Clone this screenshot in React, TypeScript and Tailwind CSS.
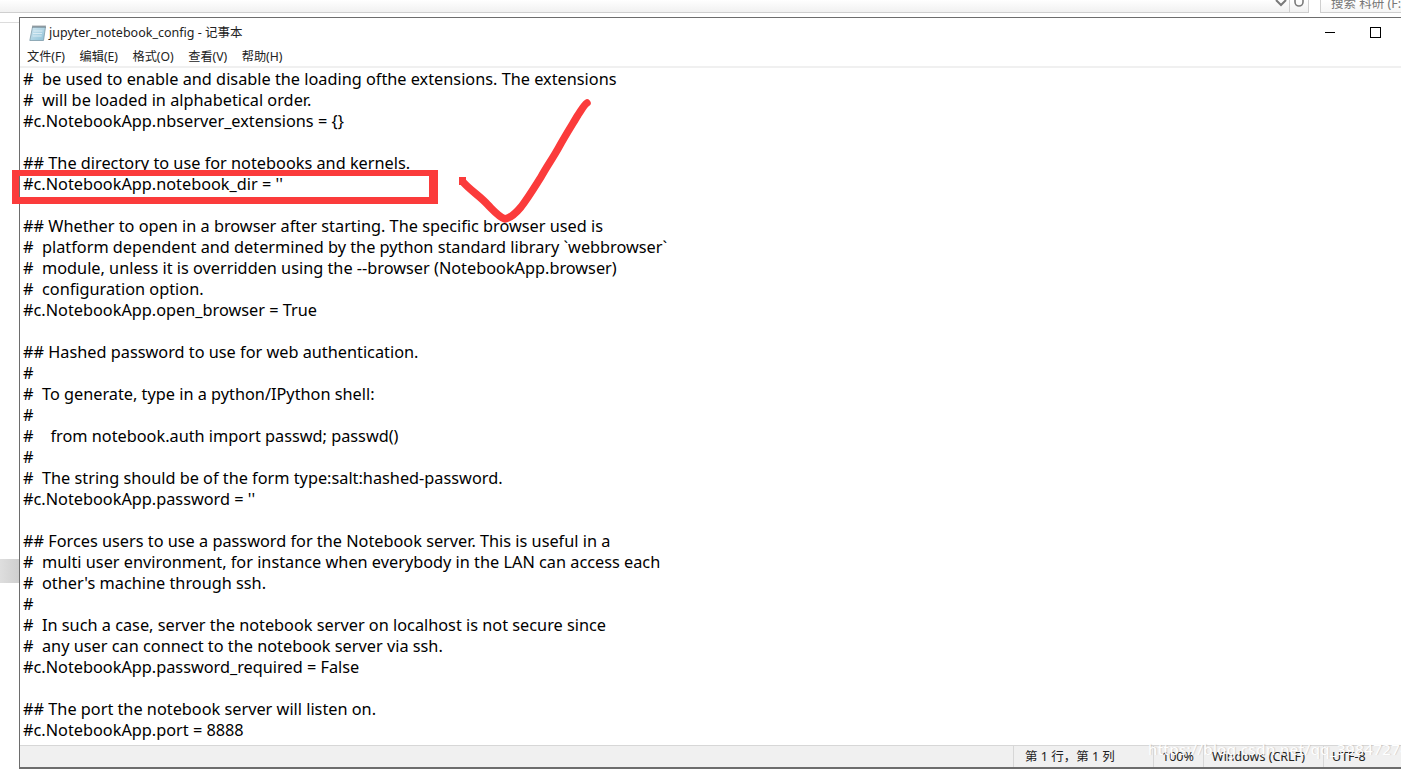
import React from "react";

const FONT = "font-['Noto_Sans','Noto_Sans_CJK_SC',sans-serif]";

const LINES = [
  "#  be used to enable and disable the loading ofthe extensions. The extensions",
  "#  will be loaded in alphabetical order.",
  "#c.NotebookApp.nbserver_extensions = {}",
  "",
  "## The directory to use for notebooks and kernels.",
  "#c.NotebookApp.notebook_dir = ''",
  "",
  "## Whether to open in a browser after starting. The specific browser used is",
  "#  platform dependent and determined by the python standard library `webbrowser`",
  "#  module, unless it is overridden using the --browser (NotebookApp.browser)",
  "#  configuration option.",
  "#c.NotebookApp.open_browser = True",
  "",
  "## Hashed password to use for web authentication.",
  "#",
  "#  To generate, type in a python/IPython shell:",
  "#",
  "#    from notebook.auth import passwd; passwd()",
  "#",
  "#  The string should be of the form type:salt:hashed-password.",
  "#c.NotebookApp.password = ''",
  "",
  "## Forces users to use a password for the Notebook server. This is useful in a",
  "#  multi user environment, for instance when everybody in the LAN can access each",
  "#  other's machine through ssh.",
  "#",
  "#  In such a case, server the notebook server on localhost is not secure since",
  "#  any user can connect to the notebook server via ssh.",
  "#c.NotebookApp.password_required = False",
  "",
  "## The port the notebook server will listen on.",
  "#c.NotebookApp.port = 8888",
];

const MENU = ["文件(F)", "编辑(E)", "格式(O)", "查看(V)", "帮助(H)"];

function NotepadIcon() {
  return (
    <svg width="17" height="16" viewBox="0 0 17 16" className="shrink-0">
      <defs>
        <linearGradient id="pad" x1="0" y1="0" x2="1" y2="1">
          <stop offset="0" stopColor="#d3e8f2" />
          <stop offset="1" stopColor="#8cc0d6" />
        </linearGradient>
      </defs>
      <path d="M3.5 2h13l-2 13.5H.8z" fill="url(#pad)" stroke="#7f9aa8" strokeWidth="0.8" />
      <path d="M3.5 1.5h13" stroke="#4f5b63" strokeWidth="2" strokeDasharray="1 1" />
      <path d="M4.5 6h9M4 8.5h9M3.6 11h9" stroke="#e3f1f7" strokeWidth="0.8" />
    </svg>
  );
}

function TopStrip() {
  return (
    <div className="h-[17px] flex items-start bg-white">
      <div className="flex-1 h-[13px] flex justify-end items-start border-b border-r border-[#cfcfcf] bg-gradient-to-b from-white to-[#f1f1f1] mr-[11px]">
        <svg width="14" height="8" viewBox="0 0 14 8">
          <path d="M2 0l5 5 5-5" fill="none" stroke="#7a7a7a" strokeWidth="2" />
        </svg>
        <div className="w-px h-[12px] bg-[#cfcfcf] ml-[1px]" />
        <svg width="12" height="8" viewBox="0 0 12 8" className="ml-[3px] mr-[1px]">
          <path d="M2 0v2a4 4 0 0 0 8 0V0" fill="none" stroke="#7a7a7a" strokeWidth="1.6" />
        </svg>
        <div className="w-[2px]" />
      </div>
      <div className="w-[81px] h-[13px] border-l border-b border-[#cfcfcf] overflow-hidden bg-gradient-to-b from-white to-[#f6f6f6] pl-[10px]">
        <div className="text-[12.5px] leading-[13px] -mt-[3px] text-[#777] whitespace-nowrap">搜索 科研 (F:)</div>
      </div>
    </div>
  );
}

export default function App() {
  return (
    <div className={`${FONT} relative w-[1401px] h-[769px] overflow-hidden bg-white flex flex-col text-black`}>
      <TopStrip />
      <div className="flex flex-1 min-h-0">
        <div className="w-[19px] shrink-0 flex flex-col">
          <div className="h-[6px] border-b border-[#dcdcdc]" />
          <div className="h-[536px]" />
          <div className="h-[24px] bg-gradient-to-r from-[#dedede] to-[#cfcfcf]" />
        </div>
        <div className="flex-1 flex flex-col border-l border-t border-[#6d6d6d] border-b-2 min-w-0">
          <div className="h-[30px] flex items-center pl-[9px] shrink-0">
            <NotepadIcon />
            <span className="ml-[3px] mt-px text-[12.5px] text-[#222]">jupyter_notebook_config - 记事本</span>
            <div className="ml-auto flex items-center mr-[20px] mb-[2px]">
              <div className="w-[10px] h-px bg-black mr-[35px]" />
              <div className="w-[11px] h-[11px] border border-black" />
            </div>
          </div>
          <div className="h-[18px] flex items-center pl-[7px] pt-px gap-[14.5px] text-[12.2px] text-[#222] shrink-0">
            {MENU.map((m) => (
              <span key={m}>{m}</span>
            ))}
          </div>
          <div className="h-[2px] bg-[#f0f0f0] shrink-0" />
          <div className="flex-1 min-h-0 overflow-hidden pl-[3px] pt-px">
            {LINES.map((l, i) => (
              <div key={i} className="h-[21px] leading-[21px] text-[16.3px] whitespace-pre">
                {l}
              </div>
            ))}
          </div>
          <div className="h-[22px] shrink-0 bg-[#f0f0f0] border-t border-[#d7d7d7] flex items-center text-[12.5px] text-[#222]">
            <div className="w-[993px]" />
            <div className="w-[140px] border-l border-[#d7d7d7] pl-[11px] pt-[2px] h-full flex items-center whitespace-nowrap">第 1 行，第 1 列</div>
            <div className="w-[50px] border-l border-[#d7d7d7] pl-[8px] pt-[2px] h-full flex items-center">100%</div>
            <div className="w-[120px] border-l border-[#d7d7d7] pl-[8px] pt-[2px] h-full flex items-center whitespace-nowrap">Windows (CRLF)</div>
            <div className="flex-1 border-l border-[#d7d7d7] pl-[8px] pt-[2px] h-full flex items-center">UTF-8</div>
          </div>
        </div>
      </div>

      {/* annotation drawn on top of the screenshot */}
      <div className="absolute left-[12px] top-[170px] w-[426px] h-[34px] border-t-[6px] border-b-[7px] border-l-[7px] border-r-[9px] border-[#fb3b3b]" />
      <svg className="absolute left-0 top-0 pointer-events-none" width="1401" height="769" viewBox="0 0 1401 769">
        <rect x="459" y="177" width="7" height="8" fill="#fb3b3b" />
        <path
          d="M463 182c8 9 17 14 25 23 6 6 11 12 17 14 6-1 11-6 16-12 7-9 13-19 20-30 6-11 12-19 18-30 6-11 13-22 19-32 4-6 6-10 9-12"
          fill="none"
          stroke="#fb3b3b"
          strokeWidth="7.5"
          strokeLinecap="round"
          strokeLinejoin="round"
        />
      </svg>
      <div className="absolute left-[1148px] top-[738px] text-[15px] text-white whitespace-nowrap tracking-[0.45px] [text-shadow:1px_0_1px_rgba(0,0,0,0.15)]">
        https://blog.csdn.net/qq_39847274
      </div>
    </div>
  );
}
